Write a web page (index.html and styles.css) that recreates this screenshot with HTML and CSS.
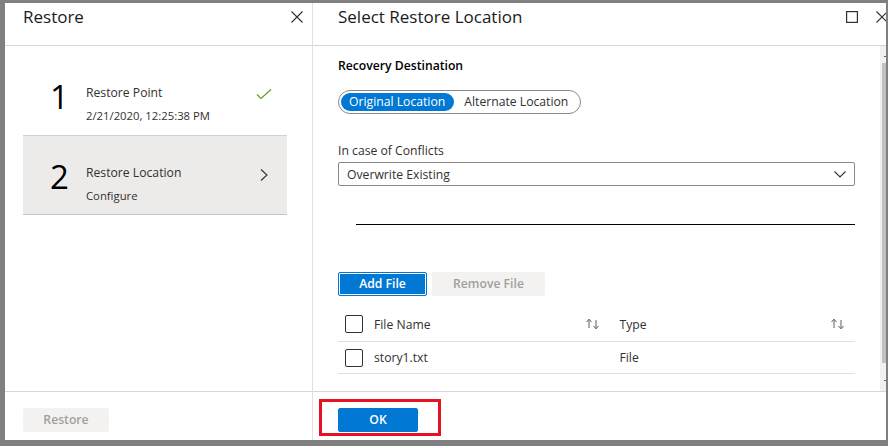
FILE: index.html
```html
<!DOCTYPE html>
<html lang="en">
<head>
<meta charset="utf-8">
<title>Restore</title>
<link rel="stylesheet" href="styles.css">
</head>
<body>
<div class="frame">
  <section class="blade blade-left">
    <header class="blade-head">
      <h1 class="blade-title">Restore</h1>
      <div class="head-icons">
        <svg class="icon" width="12" height="12" viewBox="0 0 12 12"><path d="M0.5 0.5 L11.5 11.5 M11.5 0.5 L0.5 11.5" stroke="#323130" stroke-width="1.1" fill="none"/></svg>
      </div>
    </header>
    <div class="blade-body">
      <div class="steps">
        <div class="step">
          <span class="step-num">1</span>
          <div class="step-text">
            <div class="step-title">Restore Point</div>
            <div class="step-sub">2/21/2020, 12:25:38 PM</div>
          </div>
          <svg class="step-check" width="16" height="11" viewBox="0 0 16 11"><polyline points="1,5.5 5,9.5 15,0.5" stroke="#5ba316" stroke-width="1.2" fill="none"/></svg>
        </div>
        <div class="step step-active">
          <span class="step-num">2</span>
          <div class="step-text">
            <div class="step-title">Restore Location</div>
            <div class="step-sub">Configure</div>
          </div>
          <svg class="step-chevron" width="8" height="12" viewBox="0 0 8 12"><polyline points="1,0.5 7,6 1,11.5" stroke="#323130" stroke-width="1.1" fill="none"/></svg>
        </div>
      </div>
    </div>
    <footer class="blade-foot">
      <button class="btn btn-disabled btn-restore">Restore</button>
    </footer>
  </section>

  <section class="blade blade-right">
    <header class="blade-head">
      <h1 class="blade-title">Select Restore Location</h1>
      <div class="head-icons head-icons-right">
        <svg class="icon" width="12" height="12" viewBox="0 0 12 12"><rect x="0.6" y="0.6" width="10.8" height="10.8" stroke="#323130" stroke-width="1.2" fill="none"/></svg>
        <svg class="icon icon-close-r" width="12" height="12" viewBox="0 0 12 12"><path d="M0.5 0.5 L11.5 11.5 M11.5 0.5 L0.5 11.5" stroke="#323130" stroke-width="1.1" fill="none"/></svg>
      </div>
    </header>
    <div class="blade-main">
      <div class="blade-scroll">
        <div class="label-strong">Recovery Destination</div>
        <div class="toggle">
          <span class="toggle-opt toggle-on">Original Location</span>
          <span class="toggle-opt">Alternate Location</span>
        </div>
        <div class="field-label">In case of Conflicts</div>
        <div class="dropdown">
          <span>Overwrite Existing</span>
          <svg width="12" height="7" viewBox="0 0 12 7"><polyline points="0.5,0.5 6,6 11.5,0.5" stroke="#323130" stroke-width="1.1" fill="none"/></svg>
        </div>
        <div class="rule"></div>
        <div class="actions">
          <button class="btn btn-primary btn-focus btn-add">Add File</button>
          <button class="btn btn-disabled btn-remove">Remove File</button>
        </div>
        <div class="grid">
          <div class="grid-row grid-head">
            <div class="cell-cb"><span class="checkbox"></span></div>
            <div class="cell">File Name</div>
            <div class="cell-sort"><svg width="16" height="12" viewBox="0 0 16 12"><path d="M4 10 V1.5 M1.5 4 L4 1.2 L6.5 4 M11 2 V10.5 M8.5 8 L11 10.8 L13.5 8" stroke="#605e5c" stroke-width="1" fill="none"/></svg></div>
            <div class="cell-gap"></div>
            <div class="cell">Type</div>
            <div class="cell-sort"><svg width="16" height="12" viewBox="0 0 16 12"><path d="M4 10 V1.5 M1.5 4 L4 1.2 L6.5 4 M11 2 V10.5 M8.5 8 L11 10.8 L13.5 8" stroke="#605e5c" stroke-width="1" fill="none"/></svg></div>
          </div>
          <div class="grid-row">
            <div class="cell-cb"><span class="checkbox"></span></div>
            <div class="cell">story1.txt</div>
            <div class="cell-sort"></div>
            <div class="cell-gap"></div>
            <div class="cell">File</div>
            <div class="cell-sort"></div>
          </div>
        </div>
      </div>
      <div class="scrollbar">
        <span class="sb-arrow sb-up"></span>
        <span class="sb-thumb"></span>
        <span class="sb-arrow sb-down"></span>
      </div>
    </div>
    <footer class="blade-foot blade-foot-right">
      <button class="btn btn-primary btn-ok">OK</button>
      <span class="highlight"></span>
    </footer>
  </section>
</div>
</body>
</html>
```

FILE: styles.css
```css
html, body {
  margin: 0;
  padding: 0;
}
body {
  background: #808080;
  font-family: "Open Sans", "Noto Sans", sans-serif;
  font-size: 12.2px;
  color: #323130;
  width: 888px;
  height: 446px;
  overflow: hidden;
}
.frame {
  margin: 3px 0 0 5px;
  width: 881px;
  height: 437px;
  background: #fff;
  display: flex;
  overflow: hidden;
}
.blade {
  display: flex;
  flex-direction: column;
  height: 100%;
  overflow: hidden;
}
.blade-left {
  width: 307px;
  border-right: 1px solid #e1e1e1;
  flex: none;
}
.blade-right {
  flex: 1;
  min-width: 0;
}
.blade-head {
  height: 42px;
  border-bottom: 1px solid #d6d6d6;
  display: flex;
  justify-content: space-between;
  align-items: flex-start;
  flex: none;
}
.blade-left .blade-head {
  padding: 0 9px 0 18px;
}
.blade-right .blade-head {
  padding: 0 0 0 25px;
}
.blade-title {
  margin: 0;
  padding-top: 1px;
  font-size: 17px;
  line-height: 26px;
  font-weight: 400;
  color: #1b1b1b;
}
.head-icons {
  display: flex;
  gap: 18px;
  padding-top: 8px;
}
.icon {
  display: block;
}
.icon-close-r {
  margin-right: -2px;
}
.blade-body {
  flex: 1;
}
.steps {
  padding: 9px 25px 0 18px;
}
.step {
  height: 80px;
  box-sizing: border-box;
  display: flex;
  align-items: center;
  border-top: 1px solid transparent;
  border-bottom: 1px solid transparent;
}
.step-active {
  background: #edebe9;
  border-top-color: #d2d0ce;
  border-bottom-color: #c8c6c4;
}
.step-num {
  width: 36px;
  margin-left: 27px;
  padding-top: 3px;
  font-size: 33px;
  line-height: 1;
  color: #000;
  flex: none;
}
.step-text {
  flex: 1;
  align-self: flex-start;
  padding-top: 28px;
}
.step-title {
  line-height: 18px;
}
.step-sub {
  margin-top: 5px;
  font-size: 11.3px;
  line-height: 18px;
}
.step-check {
  margin-right: 15px;
  margin-top: -2px;
}
.step-chevron {
  margin-right: 19px;
}
.blade-foot {
  border-top: 1px solid #d6d6d6;
  padding: 16px 0 0 18px;
  box-sizing: border-box;
  height: 49px;
  flex: none;
}
.blade-foot-right {
  padding-left: 25px;
  position: relative;
}
.btn {
  font-family: inherit;
  font-size: 12.2px;
  font-weight: 600;
  height: 24px;
  border: 1px solid transparent;
  border-radius: 2px;
  padding: 0;
  margin: 0;
  line-height: 20px;
  cursor: default;
}
.btn-primary {
  background: #0078d4;
  border-color: #0078d4;
  color: #fff;
}
.btn-focus {
  box-shadow: inset 0 0 0 1px #fff;
}
.btn-disabled {
  background: #f3f2f1;
  color: #a19f9d;
}
.btn-restore {
  width: 86px;
}
.btn-ok {
  width: 80px;
}
.btn-add {
  width: 89px;
}
.btn-remove {
  width: 113px;
}
.highlight {
  position: absolute;
  left: 6px;
  top: 7px;
  width: 122px;
  height: 37px;
  box-sizing: border-box;
  border: 3px solid #e81123;
}
.blade-main {
  flex: 1;
  display: flex;
  min-height: 0;
}
.blade-scroll {
  flex: 1;
  padding: 9px 25px 0 25px;
  overflow: hidden;
}
.scrollbar {
  width: 6px;
  background: #f0f0f0;
  position: relative;
  flex: none;
}
.sb-thumb {
  position: absolute;
  left: 2px;
  right: 0;
  top: 17px;
  height: 300px;
  background: #c1c1c1;
}
.sb-arrow {
  position: absolute;
  right: 0;
  width: 2px;
  height: 1px;
  background: #606060;
}
.sb-up {
  top: 10px;
}
.sb-down {
  bottom: 10px;
}
.label-strong {
  font-weight: 600;
  padding-top: 1px;
  line-height: 20px;
  color: #000;
}
.toggle {
  margin-top: 14px;
  display: inline-flex;
  align-items: center;
  height: 24px;
  box-sizing: border-box;
  border: 1px solid #8a8886;
  border-radius: 12px;
  padding: 0 2px;
}
.toggle-opt {
  height: 18px;
  line-height: 18px;
  padding: 0 10px;
  border-radius: 9px;
}
.toggle-on {
  background: #0078d4;
  color: #fff;
  padding: 0 9px 0 8px;
}
.field-label {
  margin-top: 26px;
  line-height: 19px;
  padding-top: 1px;
}
.dropdown {
  margin-top: 2px;
  height: 24px;
  box-sizing: border-box;
  border: 1px solid #8a8886;
  border-radius: 2px;
  padding: 0 8px 0 8px;
  display: flex;
  align-items: center;
  justify-content: space-between;
}
.rule {
  margin: 38px 0 0 18px;
  height: 1px;
  background: #000;
}
.actions {
  margin-top: 47px;
  display: flex;
  gap: 5px;
}
.grid {
  margin-top: 11px;
}
.grid-row {
  display: grid;
  grid-template-columns: 36px 1fr 17px 18px 1fr 16px;
  padding-right: 9px;
  align-items: center;
  height: 32px;
  box-sizing: border-box;
  border-bottom: 1px solid #e1dfdd;
}
.grid-head {
  height: 35px;
}
.cell-cb {
  padding-left: 7px;
  display: flex;
}
.checkbox {
  width: 18px;
  height: 18px;
  box-sizing: border-box;
  border: 1px solid #323130;
  border-radius: 2px;
}
.cell-sort svg {
  display: block;
}
```
